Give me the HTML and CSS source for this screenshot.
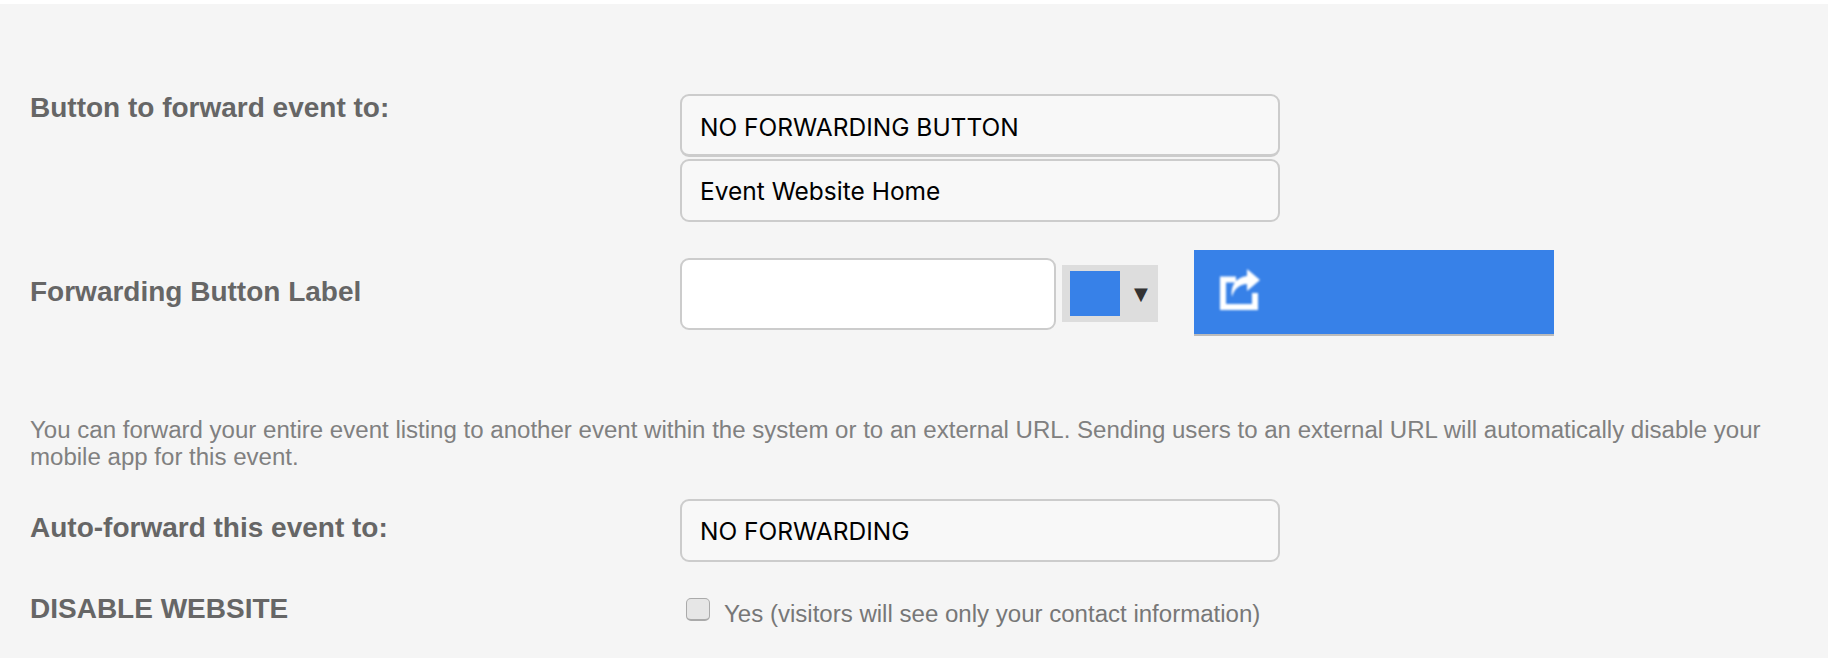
FILE: index.html
```html
<!DOCTYPE html>
<html lang="en">
<head>
    <meta charset="UTF-8">
    <title>Event forwarding</title>
    <link rel="stylesheet" href="styles.css">
</head>
<body>
    <div class="container">
        <div class="row row-top">
            <label class="field-label label-top">Button to forward event to:</label>
            <div class="select-stack">
                <div class="select-box">NO FORWARDING BUTTON</div>
                <div class="select-box">Event Website Home</div>
            </div>
        </div>

        <div class="row row-button">
            <label class="field-label" for="btnLabel">Forwarding Button Label</label>
            <input class="text-input" type="text" id="btnLabel">
            <div class="color-picker">
                <span class="swatch"></span>
                <span class="arrow">▼</span>
            </div>
            <div class="preview-btn">
                <svg class="share-icon" viewBox="0 0 40 42" width="40" height="42">
                    <path d="M16 11.5H3V39H35V25" fill="none" stroke="#fff" stroke-width="6"/>
                    <path d="M27 1L40 12L27 23V16C20 16 14 21 12 29C10 18 16 9 27 8Z" fill="#fff"/>
                </svg>
            </div>
        </div>

        <p class="help-text">You can forward your entire event listing to another event within the system or to an external URL. Sending users to an external URL will automatically disable your mobile app for this event.</p>

        <div class="row">
            <label class="field-label label-auto">Auto-forward this event to:</label>
            <div class="select-box">NO FORWARDING</div>
        </div>

        <div class="row row-check">
            <label class="field-label label-disable">DISABLE WEBSITE</label>
            <label class="check-label">
                <input class="check" type="checkbox">
                <span>Yes (visitors will see only your contact information)</span>
            </label>
        </div>
    </div>
</body>
</html>
```

FILE: styles.css
```css
html, body { height: 100%; }
body { margin: 0; background: #f5f5f5; border-top: 4px solid #fff; box-sizing: border-box; font-family: "Liberation Sans", Arial, sans-serif; color: #666; overflow: hidden; }
.container { padding: 90px 30px 0; }
.row { display: flex; align-items: center; }
.row-button { margin-top: 28px; }
.row-check { margin-top: 36px; align-items: flex-start; }
.field-label { width: 650px; flex: none; margin-top: -2px; font-size: 28px; font-weight: bold; line-height: 30px; }
.row-top { align-items: flex-start; }
.label-top { margin-top: -1px; }
.label-auto { margin-top: -5px; }
.label-disable { margin-top: -4px; }
.select-stack { display: flex; flex-direction: column; gap: 2px; }
.select-stack .select-box:first-child { border-bottom-width: 3px; line-height: 63px; }
.select-box {
    box-sizing: border-box;
    width: 600px;
    height: 63px;
    padding-left: 18px;
    border: 2px solid #ccc;
    border-radius: 9px;
    background: #f8f8f8;
    color: #000;
    font-family: Inter, "Liberation Sans", sans-serif;
    font-size: 24.5px;
    line-height: 61px;
}
.text-input {
    box-sizing: border-box;
    width: 376px;
    height: 72px;
    margin-top: 2px;
    border: 2px solid #ccc;
    border-radius: 9px;
    background: #fff;
    outline: none;
}
.color-picker { display: flex; align-items: center; box-sizing: border-box; width: 96px; height: 57px; margin-left: 6px; padding-left: 8px; background: #ddd; }
.swatch { width: 50px; height: 45px; background: #3781e8; }
.arrow { margin-left: 14px; color: #333; font-family: "DejaVu Sans", sans-serif; font-size: 18px; }
.preview-btn { display: flex; align-items: center; box-sizing: border-box; width: 360px; height: 86px; margin-left: 36px; padding-left: 26px; background: #3781e8; border-bottom: 2px solid #bbb; }
.share-icon { filter: blur(0.8px); margin-top: -6px; }
.help-text { margin: 80px 0 29px; font-size: 24.05px; line-height: 27px; color: #808080; }
.check-label { display: flex; align-items: flex-start; font-size: 24.05px; line-height: 32px; color: #777; }
.check {
    appearance: none;
    box-sizing: border-box;
    width: 24px;
    height: 23px;
    margin: 0 14px 0 6px;
    border: 1px solid #aaa;
    border-bottom-width: 2px;
    border-radius: 5px;
    background: #e6e6e6;
}
```
